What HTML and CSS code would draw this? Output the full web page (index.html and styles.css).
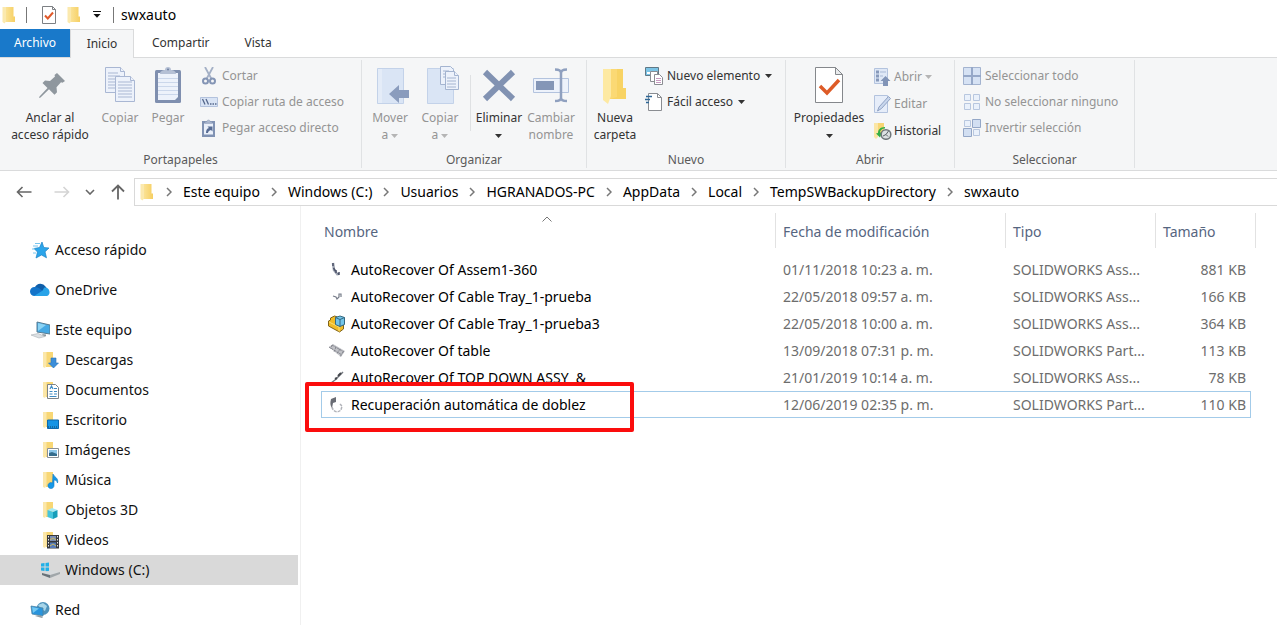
FILE: index.html
```html
<!DOCTYPE html>
<html lang="es">
<head>
<meta charset="utf-8">
<title>swxauto</title>
<link rel="stylesheet" href="styles.css">
</head>
<body>
<svg class="defs" aria-hidden="true">
  <defs>
    <linearGradient id="gold" x1="0" x2="1"><stop offset="0" stop-color="#fbe49a"/><stop offset="1" stop-color="#f6cf62"/></linearGradient>
    <symbol id="folder" viewBox="0 0 16 18"><path d="M4 1h8.500v9.500H14V16H4z" fill="url(#gold)"/><path d="M1.500 1H5v14.500L3.500 17.500 1.500 16z" fill="#fbe9ae"/></symbol>
    <symbol id="half-folder" viewBox="0 0 18 18"><path d="M4 1h7v15H4z" fill="#f8d775"/><path d="M1 1h3.500v13L3 17l-2-1z" fill="#fbe7aa"/></symbol>
    <symbol id="chev" viewBox="0 0 6 10"><path d="M1 1l4 4-4 4" fill="none" stroke="#777" stroke-width="1.500"/></symbol>
    <symbol id="caret" viewBox="0 0 7 4"><path d="M0 0h7L3.500 4z" fill="currentColor"/></symbol>
  </defs>
</svg>

<header class="titlebar">
  <svg class="i16x18"><use href="#folder"/></svg>
  <span class="bar first"></span>
  <button class="plain" aria-label="Propiedades"><svg width="16" height="18" viewBox="0 0 16 18"><path d="M1.500.5h10l3 3v14h-13z" fill="#fff" stroke="#7d8084"/><path d="M11.500.5v3h3" fill="none" stroke="#7d8084"/><path d="M4 9.500l2.800 3L12 6.500" fill="none" stroke="#e0592a" stroke-width="2"/></svg></button>
  <button class="plain" aria-label="Nueva carpeta"><svg class="i16x18"><use href="#folder"/></svg></button>
  <button class="plain custom" aria-label="Personalizar"><svg width="8" height="7" viewBox="0 0 8 7"><path d="M0 .5h8" stroke="#111"/><path d="M.5 3h7L4 6.800z" fill="#111"/></svg></button>
  <span class="bar"></span>
  <h1>swxauto</h1>
</header>

<nav class="tabs">
  <button class="tab file">Archivo</button>
  <button class="tab current">Inicio</button>
  <button class="tab">Compartir</button>
  <button class="tab vista">Vista</button>
</nav>

<section class="ribbon">
  <div class="group">
    <div class="tools clipboard">
      <button class="big wide"><svg width="38" height="38" viewBox="0 0 38 38"><path d="M26 7l8 8-2.500 1.800-1.500-.5-4.500 5 .5 5-2.500 2.500-5.500-5.500L9.500 31.500l-1.500.5.500-1.500 8-8.500-5-5 2.500-2.500 5 .5 5-4.500-.5-1.500z" fill="#8f979e"/></svg><span>Anclar al<br>acceso rápido</span></button>
      <button class="big narrow" disabled><svg width="38" height="38" viewBox="0 0 38 38"><g fill="#edf2fb" stroke="#a9b7d3"><path d="M4.500 1.500h15l4 4v21h-19z"/><path d="M19.500 1.500v4h4M7 7h10M7 10h12M7 13h12M7 16h12M7 19h10M7 22h10"/><path d="M14.500 10.500h15l4 4v21h-19z"/><path d="M29.500 10.500v4h4M17 16h14M17 19h14M17 22h14M17 25h14M17 28h14M17 31h14"/></g></svg><span>Copiar</span></button>
      <button class="big narrow" disabled><svg width="38" height="38" viewBox="0 0 38 38"><rect x="6" y="4" width="26" height="33" rx="1.500" fill="#7f8faf"/><path d="M9 7h20v27H9z" fill="#edf2fb"/><path d="M9 12.500h20M9 16.500h20M9 20.500h20M9 24.500h20M9 28.500h20" stroke="#cbd7eb"/><path d="M26 34l3-3v3z" fill="#7f8faf"/><path d="M11 8c0-3 3-4 5-4a3 3 0 0 1 6 0c2 0 5 1 5 4z" fill="#b5c0d5"/><circle cx="19" cy="3.500" r="1" fill="#6f80a1"/></svg><span>Pegar</span></button>
      <div class="small-list">
        <button class="small" disabled><svg width="18" height="18" viewBox="0 0 18 18"><path d="M5 0l6.500 12M13 0L6.500 12" stroke="#a4b0c6" stroke-width="1.800"/><circle cx="5.500" cy="14" r="2.500" fill="none" stroke="#8495b5" stroke-width="2"/><circle cx="12.500" cy="14" r="2.500" fill="none" stroke="#8495b5" stroke-width="2"/></svg>Cortar</button>
        <button class="small" disabled><svg width="18" height="18" viewBox="0 0 18 18"><path d="M.5 4.500h17v9H.5z" fill="#d9e4f5" stroke="#b3c2dd"/><path d="M2.500 6l2.500 5.500M6 6l2.500 5.500" stroke="#56688c" stroke-width="1.300"/><path d="M10 11h1.500M12.500 11H14M15 11h1.500" stroke="#56688c" stroke-width="1.500"/></svg>Copiar ruta de acceso</button>
        <button class="small" disabled><svg width="18" height="18" viewBox="0 0 18 18"><path d="M2 2h13v16H2z" fill="#8092b3"/><path d="M4 4.500h9v11H4z" fill="#eaf0fa"/><path d="M5 4V2.500h2a1.500 1.500 0 0 1 3 0h2V4z" fill="#b1bdd3" stroke="#8092b3" stroke-width=".5"/><path d="M6 14c0-3 1-4.500 3-5L7.500 7.500h5v5L11 11c-2 .5-3 1.500-3 3z" fill="#576c94"/></svg>Pegar acceso directo</button>
      </div>
    </div>
    <h2>Portapapeles</h2>
  </div>

  <div class="group">
    <div class="tools inset">
      <button class="big" disabled><svg width="38" height="38" viewBox="0 0 38 38"><path d="M6.500 2.500h26v35h-26z" fill="#dae5f5" stroke="#c3d2e9"/><path d="M7 3h4v34H7z" fill="#e4ecf8"/><path d="M18 28l10-9v5h10v8H28v5z" fill="#8a9cbd"/></svg><span>Mover<br>a <svg class="caret"><use href="#caret"/></svg></span></button>
      <button class="big" disabled><svg width="38" height="38" viewBox="0 0 38 38"><path d="M6.500 2.500h26v35h-26z" fill="#dae5f5" stroke="#c3d2e9"/><g fill="#edf2fb" stroke="#a4b4d0"><path d="M19.500.5h10l3 3v15h-13z"/><path d="M24.500 5.500h9l4 4v14h-13z"/><path d="M33.500 5.500v4h4M22 5h6M22 8h3M22 11h3M26 12h9M26 15h9M26 18h9M26 21h9"/></g></svg><span>Copiar<br>a <svg class="caret"><use href="#caret"/></svg></span></button>
      <span class="split"></span>
      <button class="big mid"><svg width="38" height="38" viewBox="0 0 38 38"><path d="M5 6l28 27M33 6L5 33" stroke="#8192b2" stroke-width="6"/></svg><span>Eliminar<br><svg class="caret"><use href="#caret"/></svg></span></button>
      <button class="big mid" disabled><svg width="38" height="38" viewBox="0 0 38 38"><path d="M1.500 12.500h35v14h-35z" fill="#edf2fb" stroke="#b3c3de"/><path d="M4 15h18v9H4z" fill="#8496b7"/><path d="M23 3.500c4 0 6 1 6 3.500v25c0 2-2 3-6 3m12-31.500c-4 0-6 1-6 3.500v25c0 2 2 3 6 3" fill="none" stroke="#8fa0bf" stroke-width="2.500"/></svg><span>Cambiar<br>nombre</span></button>
    </div>
    <h2>Organizar</h2>
  </div>

  <div class="group">
    <div class="tools inset">
      <button class="big"><svg width="38" height="38" viewBox="0 0 38 38"><path d="M14 3h13v19h3v11H14z" fill="#f8d364"/><path d="M14 3v30l7-2V3z" fill="#fbd974"/><path d="M7 3h8v27l-3 8-5-4z" fill="#fde9a2"/></svg><span>Nueva<br>carpeta</span></button>
      <div class="small-list near">
        <button class="small dark"><svg width="18" height="18" viewBox="0 0 18 18"><path d="M.5.500h13v8H.5z" fill="#7cc4e6" stroke="#5f7886"/><path d="M2 5h4v2H2z" fill="#fff"/><path d="M5.500 4.500h7v10h-7z" fill="#fff" stroke="#8a8d92"/><path d="M9.500 7.500h5l3 3v7h-8z" fill="#fff" stroke="#8a8d92"/><path d="M11 11.500h5M11 13.500h5M11 15.500h5" stroke="#c79ac0"/></svg>Nuevo elemento <svg class="caret"><use href="#caret"/></svg></button>
        <button class="small dark"><svg width="18" height="18" viewBox="0 0 18 18"><path d="M3.500.5h9l4 4v13h-13z" fill="#fff" stroke="#8a8d92"/><path d="M12.500.5v4h4" fill="none" stroke="#8a8d92"/><path d="M1 3.500h6M0 6.500h5M1 9.500h3" stroke="#2f6796" stroke-width="1.500"/></svg>Fácil acceso <svg class="caret"><use href="#caret"/></svg></button>
      </div>
    </div>
    <h2>Nuevo</h2>
  </div>

  <div class="group">
    <div class="tools inset">
      <button class="big props"><svg width="38" height="38" viewBox="0 0 38 38"><path d="M5.500 1.500h20l7 7v28h-27z" fill="#fff" stroke="#85888c"/><path d="M25.500 1.500v7h7z" fill="#e9ebed" stroke="#85888c"/><path d="M10 20l7 7 12-13" fill="none" stroke="#dd5b27" stroke-width="3.500"/></svg><span>Propiedades<br><svg class="caret"><use href="#caret"/></svg></span></button>
      <div class="small-list near loose">
        <button class="small" disabled><svg width="18" height="18" viewBox="0 0 18 18"><path d="M.5.500h13v15H.5z" fill="#dfe8f6" stroke="#b3c3de"/><path d="M2 2.500h3v3H2zM2 6.500h3v3H2zM2 10.500h3v3H2z" fill="#8799ba"/><path d="M6 4h6M6 8h3" stroke="#a9b9d5"/><path d="M11.500 8l5 5H14v5H9v-5H6.500z" fill="#8194b7"/></svg>Abrir <svg class="caret"><use href="#caret"/></svg></button>
        <button class="small" disabled><svg width="18" height="18" viewBox="0 0 18 18"><path d="M.5.500h13v17H.5z" fill="#e6edf9" stroke="#b3c3de"/><path d="M14.500 1.500l2 2-9 10-4 2.500 1.500-4z" fill="#c8d6ec" stroke="#90a2c3"/></svg>Editar</button>
        <button class="small dark"><svg width="18" height="18" viewBox="0 0 18 18"><path d="M0 1h10v12H0z" fill="#f8d674"/><path d="M0 1h4v14l-2 2-2-2z" fill="#fbe6a5"/><path d="M11 5C6 5 4 8 4 11l-2 .5 4 4 2-5H6c0-2 2-4 5-4z" fill="#31ad45"/><circle cx="12" cy="12.500" r="4.800" fill="#dde1e3" stroke="#70777a" stroke-width="1.500"/><path d="M9 14l3-1.500L14.500 9M12 12.500l2 2" stroke="#5a6265" fill="none"/></svg>Historial</button>
      </div>
    </div>
    <h2>Abrir</h2>
  </div>

  <div class="group">
    <div class="tools select">
      <div class="small-list">
        <button class="small" disabled><svg width="18" height="18" viewBox="0 0 18 18"><path d="M.5.500h17v17H.5z" fill="#d6e2f4" stroke="#a3b3cf"/><path d="M9 0v18M0 9h18" stroke="#96a8c8" stroke-width="2"/></svg>Seleccionar todo</button>
        <button class="small" disabled><svg width="18" height="18" viewBox="0 0 18 18"><path d="M1.500 1.500h6v6h-6zM10.500 1.500h6v6h-6zM1.500 10.500h6v6h-6zM10.500 10.500h6v6h-6z" fill="#eaf1fb" stroke="#b8c7df"/></svg>No seleccionar ninguno</button>
        <button class="small" disabled><svg width="18" height="18" viewBox="0 0 18 18"><path d="M1.500 1.500h6v6h-6zM10.500 10.500h6v6h-6z" fill="#eaf1fb" stroke="#b8c7df"/><path d="M9.500.500h8v8h-8zM.5 9.500h8v8h-8z" fill="#d2dff2" stroke="#94a7c7"/></svg>Invertir selección</button>
      </div>
    </div>
    <h2>Seleccionar</h2>
  </div>
</section>

<div class="address">
  <div class="history">
    <button class="plain" aria-label="Atrás"><svg width="16" height="12" viewBox="0 0 16 12"><path d="M6.500 1l-5 5 5 5M2 6h13.500" fill="none" stroke="#666" stroke-width="1.600"/></svg></button>
    <button class="plain forward" aria-label="Adelante" disabled><svg width="16" height="12" viewBox="0 0 16 12"><path d="M9.500 1l5 5-5 5M.5 6H14" fill="none" stroke="#d4d4d4" stroke-width="1.600"/></svg></button>
    <button class="plain" aria-label="Recientes"><svg width="10" height="6" viewBox="0 0 10 6"><path d="M1 1l4 4 4-4" fill="none" stroke="#666" stroke-width="1.600"/></svg></button>
    <button class="plain" aria-label="Subir"><svg width="14" height="16" viewBox="0 0 14 16"><path d="M1 7.500l6-6 6 6M7 2v13.500" fill="none" stroke="#666" stroke-width="1.800"/></svg></button>
  </div>
  <nav class="crumbs">
    <svg class="i16x18"><use href="#folder"/></svg>
    <svg class="chev"><use href="#chev"/></svg><a href="#">Este equipo</a>
    <svg class="chev"><use href="#chev"/></svg><a href="#">Windows (C:)</a>
    <svg class="chev"><use href="#chev"/></svg><a href="#">Usuarios</a>
    <svg class="chev"><use href="#chev"/></svg><a href="#">HGRANADOS-PC</a>
    <svg class="chev"><use href="#chev"/></svg><a href="#">AppData</a>
    <svg class="chev"><use href="#chev"/></svg><a href="#">Local</a>
    <svg class="chev"><use href="#chev"/></svg><a href="#">TempSWBackupDirectory</a>
    <svg class="chev"><use href="#chev"/></svg><a href="#">swxauto</a>
  </nav>
</div>

<div class="content">
  <nav class="sidebar">
    <a class="node root" href="#"><svg width="20" height="18" viewBox="0 0 20 18"><path d="M12 1l1.800 5.500L19 7l-4 3.800 1.500 6L11.500 14 6 17l1.500-6L4 7.500l5.500-1z" fill="#2ba5ea" stroke="#1c82c5" stroke-width=".7"/><path d="M5 2.500h5M3 5h5M2 8h3M3 12h3" stroke="#79c5ee"/></svg>Acceso rápido</a>
    <a class="node root" href="#"><svg width="20" height="18" viewBox="0 0 20 18"><path d="M5 6a6 6 0 0 1 10.500-.5L18 9 5 12z" fill="#0f5ea9"/><path d="M4.500 15A4.500 4.500 0 0 1 4.500 6C8 5.500 10 8 13 10l-4 5z" fill="#1474c9"/><path d="M4 15l8-5c2-1.500 1-4 4-3.500 4 1 5 7 1 8.500z" fill="#28a3e8"/></svg>OneDrive</a>
    <a class="node root" href="#"><svg width="20" height="18" viewBox="0 0 20 18"><path d="M7 1l13 3v9l-13-2z" fill="#46a9e4" stroke="#577b91"/><path d="M8 2l8 2-8 6z" fill="#8bd3f4"/><path d="M1 14l7-1.500 7 3-6 1.500z" fill="#dce0e3" stroke="#a9b0b5" stroke-width=".6"/><path d="M12 13l4 .5v2l-3-1z" fill="#8e989e"/></svg>Este equipo</a>
    <a class="node child" href="#"><svg width="18" height="18" viewBox="0 0 18 18"><use href="#half-folder"/><path d="M9 7h5v5h2.500l-5 5-5-5H9z" fill="#3c8ed8" stroke="#2873b9" stroke-width=".6"/></svg>Descargas</a>
    <a class="node child" href="#"><svg width="18" height="18" viewBox="0 0 18 18"><use href="#half-folder"/><path d="M5.500 3.500h8l3 3v11h-11z" fill="#fff" stroke="#7d8387"/><path d="M8 8l1.500-3L11 8M12 7.500h3M7.500 10.500h3M12 10.500h3M7.500 13h3M12 13h3M7.500 15.500h7" fill="none" stroke="#3f8cc4" stroke-width="1.200"/></svg>Documentos</a>
    <a class="node child" href="#"><svg width="18" height="18" viewBox="0 0 18 18"><use href="#half-folder"/><path d="M5.500 9h11v8.500h-11z" fill="#1594e5" stroke="#0e69ad"/><path d="M6 16h10" stroke="#17425f" stroke-dasharray="1 1"/></svg>Escritorio</a>
    <a class="node child" href="#"><svg width="18" height="18" viewBox="0 0 18 18"><use href="#half-folder"/><path d="M5.500 7.500h11v9h-11z" fill="#fff" stroke="#8a9095"/><path d="M7 9h8v6H7z" fill="#8cc6e9"/><path d="M7 12l3-1 5 2v2H7z" fill="#356d8d"/></svg>Imágenes</a>
    <a class="node child" href="#"><svg width="18" height="18" viewBox="0 0 18 18"><use href="#half-folder"/><path d="M11 3c1 3 6 4 4.500 9-.5-2-1.500-3-3.500-3v5.500a3 3 0 1 1-1.500-2.500z" fill="#1597e8" stroke="#0e7bc5" stroke-width=".6"/></svg>Música</a>
    <a class="node child" href="#"><svg width="18" height="18" viewBox="0 0 18 18"><use href="#half-folder"/><path d="M5.500 9L10 7l5.500 2-4.500 2z" fill="#a6e9f4"/><path d="M5.500 9l5.500 2v7l-5.500-2z" fill="#45c4dc"/><path d="M15.500 9L11 11v7l4.500-2z" fill="#169db9"/></svg>Objetos 3D</a>
    <a class="node child" href="#"><svg width="18" height="18" viewBox="0 0 18 18"><use href="#half-folder"/><path d="M5 4h12v13.500H5z" fill="#37393d"/><path d="M8 5h6v5H8z" fill="#7a8db4"/><path d="M8 11.500h6V17H8z" fill="#557ab9"/><path d="M8 9l3-2 3 2M8 15l3-2 3 2" stroke="#cbb85c" fill="none"/><path d="M6.500 5v12M15.500 5v12" stroke="#e7e7e7" stroke-dasharray="1.500 1.500"/></svg>Videos</a>
    <a class="node child selected" href="#"><svg class="drive" width="20" height="18" viewBox="0 0 20 18"><path d="M1 2.500L4.500 2v3.500H1zM5.500 2L9 1.500v4H5.500zM1 6.500h3.500V10L1 9.500zM5.500 6.500H9v4L5.500 10z" fill="#20b0e8"/><path d="M3 12l8-3 9 2v2l-10 4-8-3z" fill="#d7dadc"/><path d="M2 12l8 2v3l-8-3z" fill="#697278"/><path d="M10 14l10-3v2l-10 4z" fill="#a0a6a9"/></svg>Windows (C:)</a>
    <a class="node root" href="#"><svg width="20" height="18" viewBox="0 0 20 18"><circle cx="13" cy="7.500" r="6.500" fill="#4f93bb"/><path d="M8 4l5-2 4 3-2 5-4-2z" fill="#a7d5e9"/><path d="M1 5l12 2v8L2 13z" fill="#2994dc" stroke="#4d84a5" stroke-width=".8"/><path d="M2 6l7 1.500L3 12z" fill="#74c8f2"/><path d="M5 15l7 2 1-1-4-2z" fill="#929da3"/></svg>Red</a>
  </nav>

  <main class="files">
    <table>
      <colgroup><col><col class="c-date"><col class="c-type"><col class="c-size"><col class="c-end"></colgroup>
      <thead>
        <tr><th>Nombre<svg class="sort" viewBox="0 0 10 6"><path d="M.5 5.500L5 1l4.500 4.500" fill="none" stroke="#777"/></svg></th><th>Fecha de modificación</th><th>Tipo</th><th>Tamaño</th><td></td></tr>
      </thead>
      <tbody>
        <tr><td><div class="name"><svg width="18" height="18" viewBox="0 0 18 18"><path d="M5 2l1 7 4 5" fill="none" stroke="#a0a6b3" stroke-width="2.500"/><path d="M5 2v3M5.500 7l2 3M8 9v3M10 12l1 2M11 11v3" stroke="#4c5369" stroke-width="1.500" fill="none"/></svg>AutoRecover Of Assem1-360</div></td><td>01/11/2018 10:23 a. m.</td><td>SOLIDWORKS Ass...</td><td>881 KB</td></tr>
        <tr><td><div class="name"><svg width="18" height="18" viewBox="0 0 18 18"><path d="M5 8l3 1 1 2 2-2V6h2v3" fill="none" stroke="#767c89" stroke-width="1.200"/></svg>AutoRecover Of Cable Tray_1-prueba</div></td><td>22/05/2018 09:57 a. m.</td><td>SOLIDWORKS Ass...</td><td>166 KB</td></tr>
        <tr><td><div class="name"><svg width="18" height="18" viewBox="0 0 18 18"><path d="M.5 6l2-1V3l4-2 3 1v6l6 2v4l-4 3L.5 11z" fill="#f1bc26" stroke="#80641b"/><path d="M1 7l10 5v4.500" stroke="#fadf76" fill="none"/><path d="M7.500 2.500L12 1l4.500 1.500v7L12 11.500 7.500 9.500z" fill="#73c5e9" stroke="#356981"/><path d="M7.500 2.500L12 4.500l4.500-2M12 4.500v7" fill="none" stroke="#356981"/></svg>AutoRecover Of Cable Tray_1-prueba3</div></td><td>22/05/2018 10:00 a. m.</td><td>SOLIDWORKS Ass...</td><td>364 KB</td></tr>
        <tr><td><div class="name"><svg width="18" height="18" viewBox="0 0 18 18"><path d="M1 5l4-3 12 7-4 6z" fill="#c1c2c7"/><path d="M1 5l13 8M4 3l12 7M4 3L3 7M8 5l-2 5M12 7l-3 5M15 10l-3 5" stroke="#81838b" stroke-dasharray="2 1"/></svg>AutoRecover Of table</div></td><td>13/09/2018 07:31 p. m.</td><td>SOLIDWORKS Part...</td><td>113 KB</td></tr>
        <tr><td><div class="name"><svg width="18" height="18" viewBox="0 0 18 18"><path d="M3 14l4-3 5-5 3-3" fill="none" stroke="#777b82" stroke-width="1.500"/><path d="M10 7l3-3M7 10l2-1" stroke="#44474d" stroke-width="2"/></svg>AutoRecover Of TOP DOWN ASSY&nbsp; &amp;</div></td><td>21/01/2019 10:14 a. m.</td><td>SOLIDWORKS Ass...</td><td>78 KB</td></tr>
        <tr class="focused"><td><div class="name"><svg width="18" height="18" viewBox="0 0 18 18"><path d="M8 1L3 3c-1 4-1 6 1 9l1-5 3-1z" fill="#696c74"/><path d="M4 11c1 5 6 6 9 3l1-4-2-2" fill="none" stroke="#b0b2b8" stroke-width="1.500" stroke-dasharray="3 1"/></svg>Recuperación automática de doblez</div><span class="highlight"></span></td><td>12/06/2019 02:35 p. m.</td><td>SOLIDWORKS Part...</td><td>110 KB</td></tr>
      </tbody>
    </table>
  </main>
</div>
</body>
</html>
```
FILE: styles.css
```css
* { box-sizing: border-box; }

body {
  margin: 0;
  min-height: 100vh;
  display: flex;
  flex-direction: column;
  overflow: hidden;
  background: #fff;
  color: #111;
  font: 14px/20px "Noto Sans", "Open Sans", sans-serif;
}

svg { display: block; flex: none; }
a { color: inherit; text-decoration: none; }
button { font: inherit; color: inherit; border: 0; background: none; padding: 0; }
.defs { width: 0; height: 0; position: absolute; }
.i16x18 { width: 16px; height: 18px; }
.plain { display: flex; align-items: center; justify-content: center; }

/* Title bar */
.titlebar { display: flex; align-items: center; height: 29px; padding-left: 1px; gap: 9px; }
.titlebar .bar { width: 1px; height: 16px; background: #777; }
.titlebar .first { margin-right: 5px; }
.titlebar .custom { margin: 0 3px 0 2px; }
.titlebar h1 { margin: 0 0 0 -2px; font-size: 14px; font-weight: 400; color: #000; }

/* Tabs */
.tabs { display: flex; height: 28px; font-size: 12px; color: #333; }
.tab { padding: 0 18px; }
.tab.file { width: 70px; padding: 0; background: #1979ca; color: #fff; }
.tab.current {
  width: 64px;
  height: 29px;
  padding: 0;
  z-index: 1;
  background: #f5f6f7;
  border: 1px solid #dadbdc;
  border-bottom: 0;
}
.tab.vista { padding: 0 17px; }

/* Ribbon */
.ribbon {
  display: grid;
  grid-template-columns: 362px 225px 199px 169px 180px 1fr;
  height: 114px;
  background: #f5f6f7;
  border: solid #dadbdc;
  border-width: 1px 0;
  font-size: 12px;
  color: #333;
}
.group {
  display: flex;
  flex-direction: column;
  justify-content: space-between;
  margin: 2px 0;
  border-right: 1px solid #e0e2e4;
}
.group h2 {
  margin: 0;
  font-size: 12px;
  line-height: 17px;
  font-weight: 400;
  text-align: center;
  color: #5a5a5a;
}
.tools { display: flex; padding-top: 3px; }
.tools.clipboard { padding-left: 4px; }
.tools.inset { padding-left: 3px; }
.tools.select { padding-left: 8px; }
.big {
  display: flex;
  flex-direction: column;
  align-items: center;
  gap: 5px;
  width: 50px;
  padding-top: 3px;
  line-height: 17px;
  white-space: nowrap;
}
.big.wide { width: 92px; }
.big.narrow { width: 48px; }
.big.mid { width: 52px; }
.big.props { width: 80px; }
.big:disabled, .small:disabled { color: #949494; }
.clipboard .small-list { margin-left: 8px; }
.small-list.near { margin-left: 5px; }
.small {
  display: flex;
  align-items: center;
  gap: 4px;
  height: 26px;
  white-space: nowrap;
}
.loose .small { height: 27px; gap: 2px; }
.caret { width: 7px; height: 4px; display: inline-block; vertical-align: middle; }
:disabled .caret { color: #b5b5b5; }
.small .caret { margin-left: 1px; }
.split { width: 1px; height: 56px; margin: 12px 2px 0 5px; background: #dfe1e3; }

/* Address bar */
.address { display: flex; height: 28px; margin-top: 7px; }
.history { display: flex; align-items: center; width: 134px; padding: 0 9px 0 16px; justify-content: space-between; }
.forward { margin-left: 6px; }
.crumbs {
  display: flex;
  flex: 1;
  align-items: center;
  padding-left: 4px;
  border: 1px solid #d9d9d9;
  border-right: 0;
  color: #000;
  white-space: nowrap;
}
.chev { width: 6px; height: 10px; margin: 0 11px; }

/* Folder tree */
.content { display: flex; flex: 1; }
.sidebar {
  display: flex;
  flex-direction: column;
  width: 301px;
  padding: 29px 2px 0 0;
  border-right: 1px solid #f0f0f0;
}
.node { display: flex; align-items: center; height: 30px; }
.root { gap: 5px; padding-left: 30px; }
.child { gap: 5px; padding-left: 42px; }
.child .drive { margin-left: -2px; }
.root + .root, .child + .root { margin-top: 10px; }
.selected { background: #d9d9d9; }

/* File list */
.files { flex: 1; padding: 7px 21px 0 20px; }
table { width: 100%; table-layout: fixed; border-spacing: 0; }
.c-date { width: 230px; }
.c-type { width: 150px; }
.c-size { width: 96px; }
.c-end { width: 5px; }
th {
  position: relative;
  height: 35px;
  padding: 2px 0 0 3px;
  text-align: left;
  font-weight: 400;
  color: #56657f;
}
th + th { padding-left: 7px; border-left: 1px solid #e2e2e2; }
thead td { border-right: 1px solid #e2e2e2; }
.sort { position: absolute; top: 3px; left: 50%; width: 10px; height: 6px; margin-left: -6px; }
tbody::before { content: ""; display: block; height: 8px; }
tbody td {
  height: 27px;
  padding: 0 0 0 8px;
  border: solid transparent;
  border-width: 1px 0;
  color: #6d6d6d;
  white-space: nowrap;
}
tbody td:first-child { position: relative; padding-left: 6px; border-left-width: 1px; color: #000; }
tbody td:nth-child(4) { padding-right: 4px; text-align: right; border-right-width: 1px; }
tbody .focused td { border-color: #a3cbe9; }
.name { display: flex; align-items: center; gap: 5px; }
.highlight {
  position: absolute;
  inset: -10px 141px -15px -17px;
  border: 4px solid #fb0d0d;
  border-radius: 2px;
}
```
